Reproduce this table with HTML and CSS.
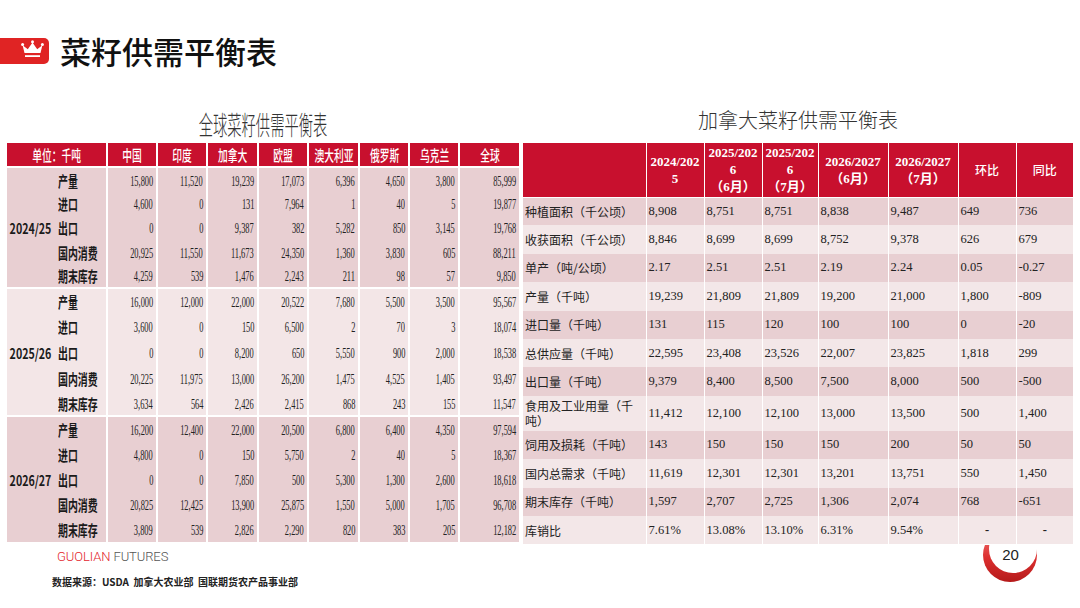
FILE: index.html
```html
<!DOCTYPE html>
<html lang="zh-CN">
<head>
<meta charset="utf-8">
<title>菜籽供需平衡表</title>
<link rel="stylesheet" href="styles.css">
</head>
<body>
<header class="top">
  <div class="logo">
    <svg width="49" height="26" viewBox="0 0 49 26">
      <path d="M24.5 15 L22.6 7.2 L27.8 11.2 L32.5 4.6 L37.2 11.2 L42.4 7.2 L40.5 15 Z" fill="#fff"/>
      <circle cx="22.6" cy="6.4" r="1.5" fill="#fff"/>
      <circle cx="32.5" cy="3.8" r="1.5" fill="#fff"/>
      <circle cx="42.4" cy="6.4" r="1.5" fill="#fff"/>
      <rect x="25" y="17.2" width="15" height="1.8" fill="#fff"/>
    </svg>
  </div>
  <h1 class="title">菜籽供需平衡表</h1>
</header>
<main class="main">
  <section class="left">
    <h2 class="ltitle"><span class="sx">全球菜籽供需平衡表</span></h2>
    <table class="gt">
      <colgroup>
        <col class="w46"><col class="w54"><col class="w50"><col class="w50"><col class="w51"><col class="w50"><col class="w51"><col class="w50"><col class="w50"><col class="w60">
      </colgroup>
      <thead>
        <tr><th colspan="2"><span>单位：千吨</span></th><th><span>中国</span></th><th><span>印度</span></th><th><span>加拿大</span></th><th><span>欧盟</span></th><th><span>澳大利亚</span></th><th><span>俄罗斯</span></th><th><span>乌克兰</span></th><th><span>全球</span></th></tr>
      </thead>
      <tbody class="g1">
        <tr><td class="yr" rowspan="5"><span>2024/25</span></td><td class="it"><span>产量</span></td><td class="n"><span>15,800</span></td><td class="n"><span>11,520</span></td><td class="n"><span>19,239</span></td><td class="n"><span>17,073</span></td><td class="n"><span>6,396</span></td><td class="n"><span>4,650</span></td><td class="n"><span>3,800</span></td><td class="n"><span>85,999</span></td></tr>
        <tr><td class="it"><span>进口</span></td><td class="n"><span>4,600</span></td><td class="n"><span>0</span></td><td class="n"><span>131</span></td><td class="n"><span>7,964</span></td><td class="n"><span>1</span></td><td class="n"><span>40</span></td><td class="n"><span>5</span></td><td class="n"><span>19,877</span></td></tr>
        <tr><td class="it"><span>出口</span></td><td class="n"><span>0</span></td><td class="n"><span>0</span></td><td class="n"><span>9,387</span></td><td class="n"><span>382</span></td><td class="n"><span>5,282</span></td><td class="n"><span>850</span></td><td class="n"><span>3,145</span></td><td class="n"><span>19,768</span></td></tr>
        <tr><td class="it"><span>国内消费</span></td><td class="n"><span>20,925</span></td><td class="n"><span>11,550</span></td><td class="n"><span>11,673</span></td><td class="n"><span>24,350</span></td><td class="n"><span>1,360</span></td><td class="n"><span>3,830</span></td><td class="n"><span>605</span></td><td class="n"><span>88,211</span></td></tr>
        <tr><td class="it"><span>期末库存</span></td><td class="n"><span>4,259</span></td><td class="n"><span>539</span></td><td class="n"><span>1,476</span></td><td class="n"><span>2,243</span></td><td class="n"><span>211</span></td><td class="n"><span>98</span></td><td class="n"><span>57</span></td><td class="n"><span>9,850</span></td></tr>
      </tbody>
      <tbody class="g2">
        <tr><td class="yr" rowspan="5"><span>2025/26</span></td><td class="it"><span>产量</span></td><td class="n"><span>16,000</span></td><td class="n"><span>12,000</span></td><td class="n"><span>22,000</span></td><td class="n"><span>20,522</span></td><td class="n"><span>7,680</span></td><td class="n"><span>5,500</span></td><td class="n"><span>3,500</span></td><td class="n"><span>95,567</span></td></tr>
        <tr><td class="it"><span>进口</span></td><td class="n"><span>3,600</span></td><td class="n"><span>0</span></td><td class="n"><span>150</span></td><td class="n"><span>6,500</span></td><td class="n"><span>2</span></td><td class="n"><span>70</span></td><td class="n"><span>3</span></td><td class="n"><span>18,074</span></td></tr>
        <tr><td class="it"><span>出口</span></td><td class="n"><span>0</span></td><td class="n"><span>0</span></td><td class="n"><span>8,200</span></td><td class="n"><span>650</span></td><td class="n"><span>5,550</span></td><td class="n"><span>900</span></td><td class="n"><span>2,000</span></td><td class="n"><span>18,538</span></td></tr>
        <tr><td class="it"><span>国内消费</span></td><td class="n"><span>20,225</span></td><td class="n"><span>11,975</span></td><td class="n"><span>13,000</span></td><td class="n"><span>26,200</span></td><td class="n"><span>1,475</span></td><td class="n"><span>4,525</span></td><td class="n"><span>1,405</span></td><td class="n"><span>93,497</span></td></tr>
        <tr><td class="it"><span>期末库存</span></td><td class="n"><span>3,634</span></td><td class="n"><span>564</span></td><td class="n"><span>2,426</span></td><td class="n"><span>2,415</span></td><td class="n"><span>868</span></td><td class="n"><span>243</span></td><td class="n"><span>155</span></td><td class="n"><span>11,547</span></td></tr>
      </tbody>
      <tbody class="g3">
        <tr><td class="yr" rowspan="5"><span>2026/27</span></td><td class="it"><span>产量</span></td><td class="n"><span>16,200</span></td><td class="n"><span>12,400</span></td><td class="n"><span>22,000</span></td><td class="n"><span>20,500</span></td><td class="n"><span>6,800</span></td><td class="n"><span>6,400</span></td><td class="n"><span>4,350</span></td><td class="n"><span>97,594</span></td></tr>
        <tr><td class="it"><span>进口</span></td><td class="n"><span>4,800</span></td><td class="n"><span>0</span></td><td class="n"><span>150</span></td><td class="n"><span>5,750</span></td><td class="n"><span>2</span></td><td class="n"><span>40</span></td><td class="n"><span>5</span></td><td class="n"><span>18,367</span></td></tr>
        <tr><td class="it"><span>出口</span></td><td class="n"><span>0</span></td><td class="n"><span>0</span></td><td class="n"><span>7,850</span></td><td class="n"><span>500</span></td><td class="n"><span>5,300</span></td><td class="n"><span>1,300</span></td><td class="n"><span>2,600</span></td><td class="n"><span>18,618</span></td></tr>
        <tr><td class="it"><span>国内消费</span></td><td class="n"><span>20,825</span></td><td class="n"><span>12,425</span></td><td class="n"><span>13,900</span></td><td class="n"><span>25,875</span></td><td class="n"><span>1,550</span></td><td class="n"><span>5,000</span></td><td class="n"><span>1,705</span></td><td class="n"><span>96,708</span></td></tr>
        <tr><td class="it"><span>期末库存</span></td><td class="n"><span>3,809</span></td><td class="n"><span>539</span></td><td class="n"><span>2,826</span></td><td class="n"><span>2,290</span></td><td class="n"><span>820</span></td><td class="n"><span>383</span></td><td class="n"><span>205</span></td><td class="n"><span>12,182</span></td></tr>
      </tbody>
    </table>
    <div class="brand"><span class="red">GUOLIAN</span> <span class="gray">FUTURES</span></div>
    <div class="src">数据来源：USDA&nbsp; 加拿大农业部&nbsp; 国联期货农产品事业部</div>
  </section>
  <section class="right">
    <h2 class="rtitle">加拿大菜籽供需平衡表</h2>
    <table class="ct">
      <colgroup>
        <col class="c123"><col class="c58"><col class="c58"><col class="c56"><col class="c70"><col class="c70"><col class="c58"><col class="c57">
      </colgroup>
      <thead>
        <tr><th></th><th>2024/202<br>5</th><th>2025/202<br>6<br>（6月）</th><th>2025/202<br>6<br>（7月）</th><th>2026/2027<br>（6月）</th><th>2026/2027<br>（7月）</th><th class="hs">环比</th><th class="hs">同比</th></tr>
      </thead>
      <tbody>
        <tr class="d"><td class="lb">种植面积（千公顷）</td><td>8,908</td><td>8,751</td><td>8,751</td><td>8,838</td><td>9,487</td><td>649</td><td>736</td></tr>
        <tr class="l"><td class="lb">收获面积（千公顷）</td><td>8,846</td><td>8,699</td><td>8,699</td><td>8,752</td><td>9,378</td><td>626</td><td>679</td></tr>
        <tr class="d"><td class="lb">单产（吨/公顷）</td><td>2.17</td><td>2.51</td><td>2.51</td><td>2.19</td><td>2.24</td><td>0.05</td><td>-0.27</td></tr>
        <tr class="l"><td class="lb">产量（千吨）</td><td>19,239</td><td>21,809</td><td>21,809</td><td>19,200</td><td>21,000</td><td>1,800</td><td>-809</td></tr>
        <tr class="d"><td class="lb">进口量（千吨）</td><td>131</td><td>115</td><td>120</td><td>100</td><td>100</td><td>0</td><td>-20</td></tr>
        <tr class="l"><td class="lb">总供应量（千吨）</td><td>22,595</td><td>23,408</td><td>23,526</td><td>22,007</td><td>23,825</td><td>1,818</td><td>299</td></tr>
        <tr class="d"><td class="lb">出口量（千吨）</td><td>9,379</td><td>8,400</td><td>8,500</td><td>7,500</td><td>8,000</td><td>500</td><td>-500</td></tr>
        <tr class="l tall"><td class="lb">食用及工业用量（千吨）</td><td>11,412</td><td>12,100</td><td>12,100</td><td>13,000</td><td>13,500</td><td>500</td><td>1,400</td></tr>
        <tr class="d"><td class="lb">饲用及损耗（千吨）</td><td>143</td><td>150</td><td>150</td><td>150</td><td>200</td><td>50</td><td>50</td></tr>
        <tr class="l"><td class="lb">国内总需求（千吨）</td><td>11,619</td><td>12,301</td><td>12,301</td><td>13,201</td><td>13,751</td><td>550</td><td>1,450</td></tr>
        <tr class="d"><td class="lb">期末库存（千吨）</td><td>1,597</td><td>2,707</td><td>2,725</td><td>1,306</td><td>2,074</td><td>768</td><td>-651</td></tr>
        <tr class="l"><td class="lb">库销比</td><td>7.61%</td><td>13.08%</td><td>13.10%</td><td>6.31%</td><td>9.54%</td><td class="dash">-</td><td class="dash">-</td></tr>
      </tbody>
    </table>
  </section>
</main>
<div class="badge">
  <svg width="60" height="40" viewBox="0 0 60 40">
    <defs>
      <linearGradient id="rg" x1="0" y1="0" x2="0" y2="1">
        <stop offset="0" stop-color="#f47a7a"/>
        <stop offset="0.55" stop-color="#dc2f2f"/>
        <stop offset="1" stop-color="#b51a1a"/>
      </linearGradient>
    </defs>
    <circle cx="30" cy="10" r="27" fill="url(#rg)"/>
    <circle cx="33" cy="4" r="24" fill="#fff"/>
  </svg>
  <span class="pg">20</span>
</div>
</body>
</html>
```

FILE: styles.css
```css
* { box-sizing: border-box; }

body {
  margin: 0;
  width: 1080px;
  height: 608px;
  overflow: hidden;
  background: #fff;
  position: relative;
  font-family: "Noto Sans CJK SC", "Noto Sans", sans-serif;
  color: #222;
}

/* ---------- header ---------- */
.top {
  display: flex;
  align-items: center;
  margin-top: 36px;
  height: 30px;
}
.logo {
  width: 49px;
  height: 26px;
  background: #e02424;
  border-radius: 0 5px 5px 0;
  display: flex;
}
.logo svg { display: block; }
.title {
  margin: 0 0 0 11px;
  font-size: 31px;
  line-height: 30px;
  font-weight: 500;
  color: #111;
}

/* ---------- main ---------- */
.main {
  display: flex;
  gap: 4px;
  margin-top: 34px;
  padding-left: 7px;
}
.left { width: 512px; }
.right { width: 550px; }

.ltitle {
  margin: 0;
  height: 43px;
  padding-top: 5px;
  display: flex;
  justify-content: center;
  align-items: center;
  font-size: 26px;
  line-height: 1;
  font-weight: 300;
  color: #333;
}
.ltitle .sx {
  display: inline-block;
  white-space: nowrap;
  transform: scaleX(0.55);
  transform-origin: center;
  margin: 0 -60px;
}

.rtitle {
  margin: 0;
  height: 43px;
  padding-bottom: 3px;
  display: flex;
  justify-content: center;
  align-items: center;
  font-size: 20px;
  line-height: 1;
  font-weight: 300;
  color: #333;
}

/* ---------- global table (squeezed) ---------- */
.gt {
  width: 512px;
  border-collapse: collapse;
  table-layout: fixed;
}
.w46 { width: 46px; }
.w50 { width: 50px; }
.w51 { width: 51px; }
.w54 { width: 54px; }
.w60 { width: 60px; }

.gt th {
  background: #c8102e;
  color: #fff;
  height: 24px;
  padding: 0;
  font-size: 15px;
  font-weight: 500;
  line-height: 1;
  text-align: center;
  border-left: 2px solid #fff;
}
.gt th:first-child { border-left: 0; }
.gt th span {
  display: inline-block;
  white-space: nowrap;
  transform: scaleX(0.65);
  transform-origin: center;
  margin: 0 -30px;
}

.gt tbody { border-top: 2px solid #fff; }
.gt .g1 td, .gt .g3 td { background: #e8cfd2; }
.gt .g2 td { background: #f3e6e7; }
.gt .g1 tr { height: 24.2px; }
.gt .g2 tr { height: 25.6px; }
.gt .g3 tr { height: 25.2px; }

.gt td {
  padding: 0;
  line-height: 1;
  border-left: 2px solid #fff;
}
.gt td.yr { border-left: 0; text-align: center; }
.gt td.it { border-left: 0; text-align: left; padding-left: 5px; }
.gt td.n { text-align: right; padding-right: 3px; }

.gt td span {
  display: inline-block;
  white-space: nowrap;
}
.gt td.n span {
  font-family: "Liberation Serif", serif;
  font-size: 15px;
  color: #222;
  transform: scaleX(0.56);
  transform-origin: right center;
  margin-left: -30px;
}
.gt td.it span {
  font-size: 15px;
  font-weight: 700;
  color: #1a1a1a;
  transform: scaleX(0.66);
  transform-origin: left center;
  margin-right: -30px;
}
.gt td.yr span {
  font-size: 14px;
  font-weight: 700;
  color: #1a1a1a;
  transform: scaleX(0.76);
  transform-origin: center;
  margin: 0 -20px;
}

/* ---------- footer ---------- */
.brand {
  margin: 7px 0 0 50px;
  font-family: Roboto, "Liberation Sans", sans-serif;
  font-size: 13px;
  font-weight: 300;
  line-height: 16px;
  letter-spacing: -0.1px;
}
.brand .red { color: #e3262d; }
.brand .gray { color: #555; }
.src {
  margin: 10px 0 0 45px;
  font-size: 10px;
  font-weight: 700;
  line-height: 14px;
  color: #222;
  white-space: nowrap;
}

/* ---------- canada table ---------- */
.ct {
  width: 550px;
  border-collapse: collapse;
  table-layout: fixed;
}
.c123 { width: 123px; }
.c58 { width: 58px; }
.c56 { width: 56px; }
.c57 { width: 57px; }
.c70 { width: 70px; }

.ct th {
  background: #c8102e;
  color: #fff;
  height: 54px;
  padding: 0;
  font-family: "Liberation Serif", "Noto Sans CJK SC", serif;
  font-size: 13px;
  font-weight: 700;
  line-height: 17px;
  text-align: center;
  border-left: 1px solid #fff;
}
.ct th:first-child { border-left: 0; }
.ct th.hs {
  font-family: "Noto Sans CJK SC", sans-serif;
  font-size: 12px;
  font-weight: 500;
}
.ct tbody { border-top: 1px solid #fff; }
.ct td {
  height: 28.4px;
  padding: 0 2px;
  font-family: "Liberation Serif", serif;
  font-size: 12.5px;
  line-height: 15px;
  color: #222;
  border-left: 1px solid #fff;
  white-space: nowrap;
}
.ct td.lb {
  border-left: 0;
  font-family: "Noto Sans CJK SC", sans-serif;
  font-size: 12px;
  white-space: normal;
}
.ct tr.tall td { height: 35px; }
.ct tr.d td { background: #e8cfd2; }
.ct tr.l td { background: #f3e7e8; }
.ct td.dash { text-align: center; font-weight: 700; }

/* ---------- page badge ---------- */
.badge {
  position: absolute;
  left: 980px;
  top: 545px;
  width: 60px;
  height: 40px;
}
.badge svg { display: block; }
.badge .pg {
  position: absolute;
  left: 0;
  top: 2px;
  width: 61px;
  text-align: center;
  font-family: "Liberation Sans", sans-serif;
  font-size: 15px;
  line-height: 15px;
  color: #222;
}
```
